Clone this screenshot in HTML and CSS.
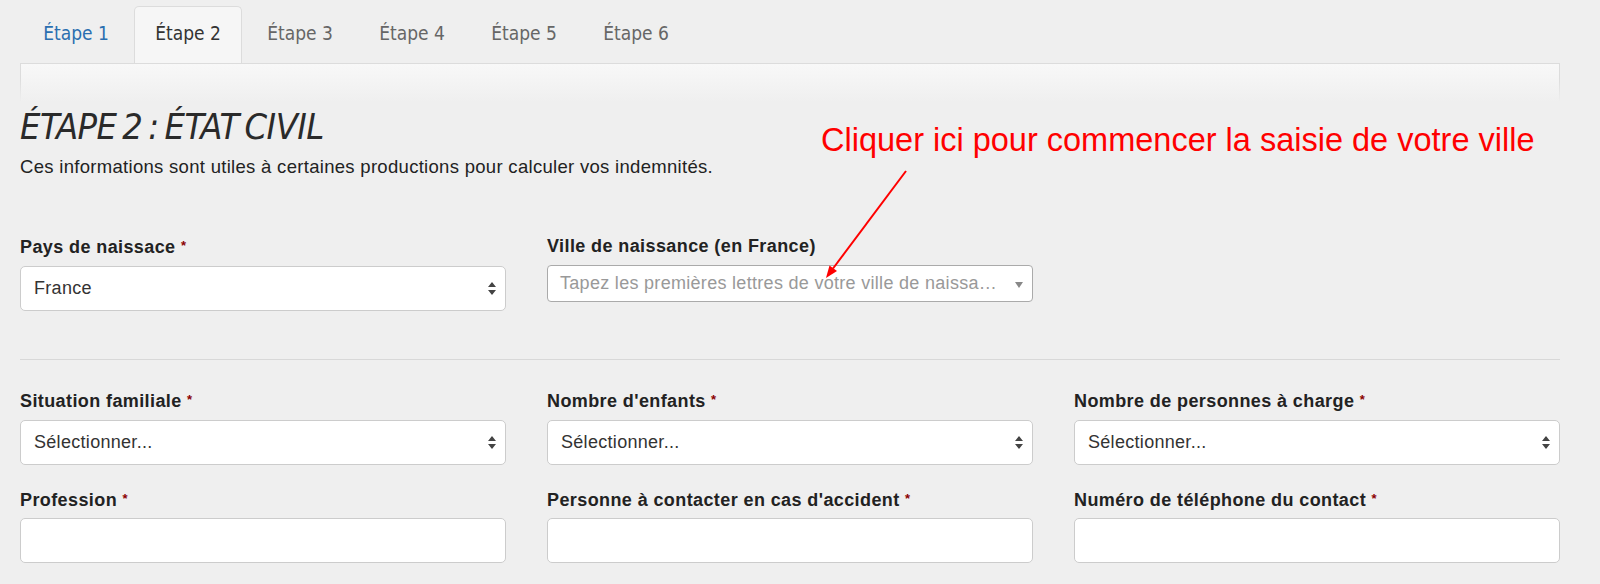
FILE: index.html
```html
<!DOCTYPE html>
<html lang="fr">
  <head>
    <meta charset="UTF-8" />
    <title>Étape 2 : État civil</title>
    <link rel="stylesheet" href="styles.css">
  </head>
  <body>
    <div class="page">
      <ul class="onglets">
        <li class="fait">Étape 1</li>
        <li class="actif">Étape 2</li>
        <li>Étape 3</li>
        <li>Étape 4</li>
        <li>Étape 5</li>
        <li>Étape 6</li>
      </ul>
      <div class="bandeau"><div class="bandeau-fond"></div></div>

      <h1>Étape 2 : État civil</h1>
      <p class="intro">Ces informations sont utiles à certaines productions pour calculer vos indemnités.</p>

      <div class="ligne">
        <div class="champ">
          <label>Pays de naissace <span class="req">*</span></label>
          <div class="select">France</div>
        </div>
        <div class="champ">
          <label>Ville de naissance (en France)</label>
          <div class="select2"><span>Tapez les premières lettres de votre ville de naissa…</span></div>
        </div>
      </div>

      <hr />

      <div class="ligne">
        <div class="champ">
          <label>Situation familiale <span class="req">*</span></label>
          <div class="select">Sélectionner...</div>
        </div>
        <div class="champ">
          <label>Nombre d'enfants <span class="req">*</span></label>
          <div class="select">Sélectionner...</div>
        </div>
        <div class="champ">
          <label>Nombre de personnes à charge <span class="req">*</span></label>
          <div class="select">Sélectionner...</div>
        </div>
      </div>
      <div class="ligne ligne-suite">
        <div class="champ">
          <label>Profession <span class="req">*</span></label>
          <div class="input"></div>
        </div>
        <div class="champ">
          <label>Personne à contacter en cas d'accident <span class="req">*</span></label>
          <div class="input"></div>
        </div>
        <div class="champ">
          <label>Numéro de téléphone du contact <span class="req">*</span></label>
          <div class="input"></div>
        </div>
      </div>
    </div>

    <div class="note">Cliquer ici pour commencer la saisie de votre ville</div>
    <svg class="fleche" width="1600" height="584" viewBox="0 0 1600 584">
      <line x1="906" y1="171" x2="833" y2="268.5" stroke="#f00" stroke-width="2" />
      <polygon points="826,278 837,271 829.5,265.5" fill="#f00" />
    </svg>
  </body>
</html>
```

FILE: styles.css
```css
* { box-sizing: border-box }
body {
  margin: 0;
  background: #efefef;
  font-family: "Liberation Sans", Arial, sans-serif;
  color: #222;
}
.page { padding: 6px 40px 0 20px }

.onglets {
  display: flex;
  gap: 4px;
  list-style: none;
  margin: 0;
  padding: 0 0 0 2px;
  font-family: "DejaVu Sans Condensed", "DejaVu Sans", sans-serif;
  font-stretch: condensed;
  font-size: 19px;
}
.onglets li {
  width: 108px;
  padding: 14px 0 17px;
  line-height: 25px;
  text-align: center;
  color: #666;
  border: 1px solid transparent;
  border-bottom: none;
  border-radius: 5px 5px 0 0;
}
.onglets .fait { color: #2a6eb0 }
.onglets .actif {
  color: #333;
  background: #f6f6f6;
  border-color: #dcdcdc;
}

.bandeau {
  height: 39px;
  padding: 1px 1px 0;
  background: linear-gradient(#dcdcdc, #dcdcdc 40%, rgba(220,220,220,0));
}
.bandeau-fond {
  height: 100%;
  background: linear-gradient(#f8f8f8, #efefef);
}

h1 {
  margin: 3px 0 0;
  font-family: "DejaVu Sans Condensed", "DejaVu Sans", sans-serif;
  font-stretch: condensed;
  font-weight: 300;
  font-style: italic;
  font-size: 36px;
  line-height: 44px;
  letter-spacing: -0.5px;
  word-spacing: -4px;
  text-transform: uppercase;
  color: #2a2a2a;
}
.intro {
  margin: 7px 0 0;
  font-size: 18.5px;
  line-height: 22px;
  letter-spacing: 0.3px;
}

.ligne {
  display: grid;
  grid-template-columns: repeat(3, minmax(0, 1fr));
  column-gap: 41px;
  margin-top: 57px;
}
.ligne-suite { margin-top: 23px }
.ligne-suite label { margin-bottom: 7px }
label {
  display: block;
  margin-bottom: 8px;
  font-size: 18px;
  line-height: 22px;
  letter-spacing: 0.4px;
  font-weight: bold;
}
.req { color: #8b0000; font-size: 13px; vertical-align: 3px; letter-spacing: 0 }

.select, .input {
  height: 45px;
  padding: 0 13px;
  background: #fff;
  border: 1px solid #ccc;
  border-radius: 5px;
  line-height: 43px;
  font-size: 18px;
  letter-spacing: 0.3px;
  color: #333;
}
.select {
  background: #fff url("data:image/svg+xml,%3Csvg xmlns='http://www.w3.org/2000/svg' width='8' height='13'%3E%3Cpath d='M4 0L8 5H0z M0 8H8L4 13z' fill='%23444'/%3E%3C/svg%3E") no-repeat right 9px center;
}
.select2 {
  height: 37px;
  padding: 0 26px 0 12px;
  background: #fff;
  border: 1px solid #aaa;
  border-radius: 4px;
  line-height: 35px;
  font-size: 18px;
  letter-spacing: 0.3px;
  color: #999;
  position: relative;
}
.select2 span {
  display: block;
  white-space: nowrap;
}
.select2::after {
  content: "";
  position: absolute;
  right: 9px;
  top: 16px;
  border: 4.5px solid transparent;
  border-top: 6px solid #888;
  border-bottom: none;
}

hr {
  margin: 48px 0 0;
  border: none;
  border-top: 1px solid #d8d8d8;
}
hr + .ligne { margin-top: 29px }

.note {
  position: absolute;
  left: 821px;
  top: 122px;
  font-size: 32.5px;
  color: #f00;
}
.fleche {
  position: absolute;
  left: 0;
  top: 0;
  pointer-events: none;
}
```
